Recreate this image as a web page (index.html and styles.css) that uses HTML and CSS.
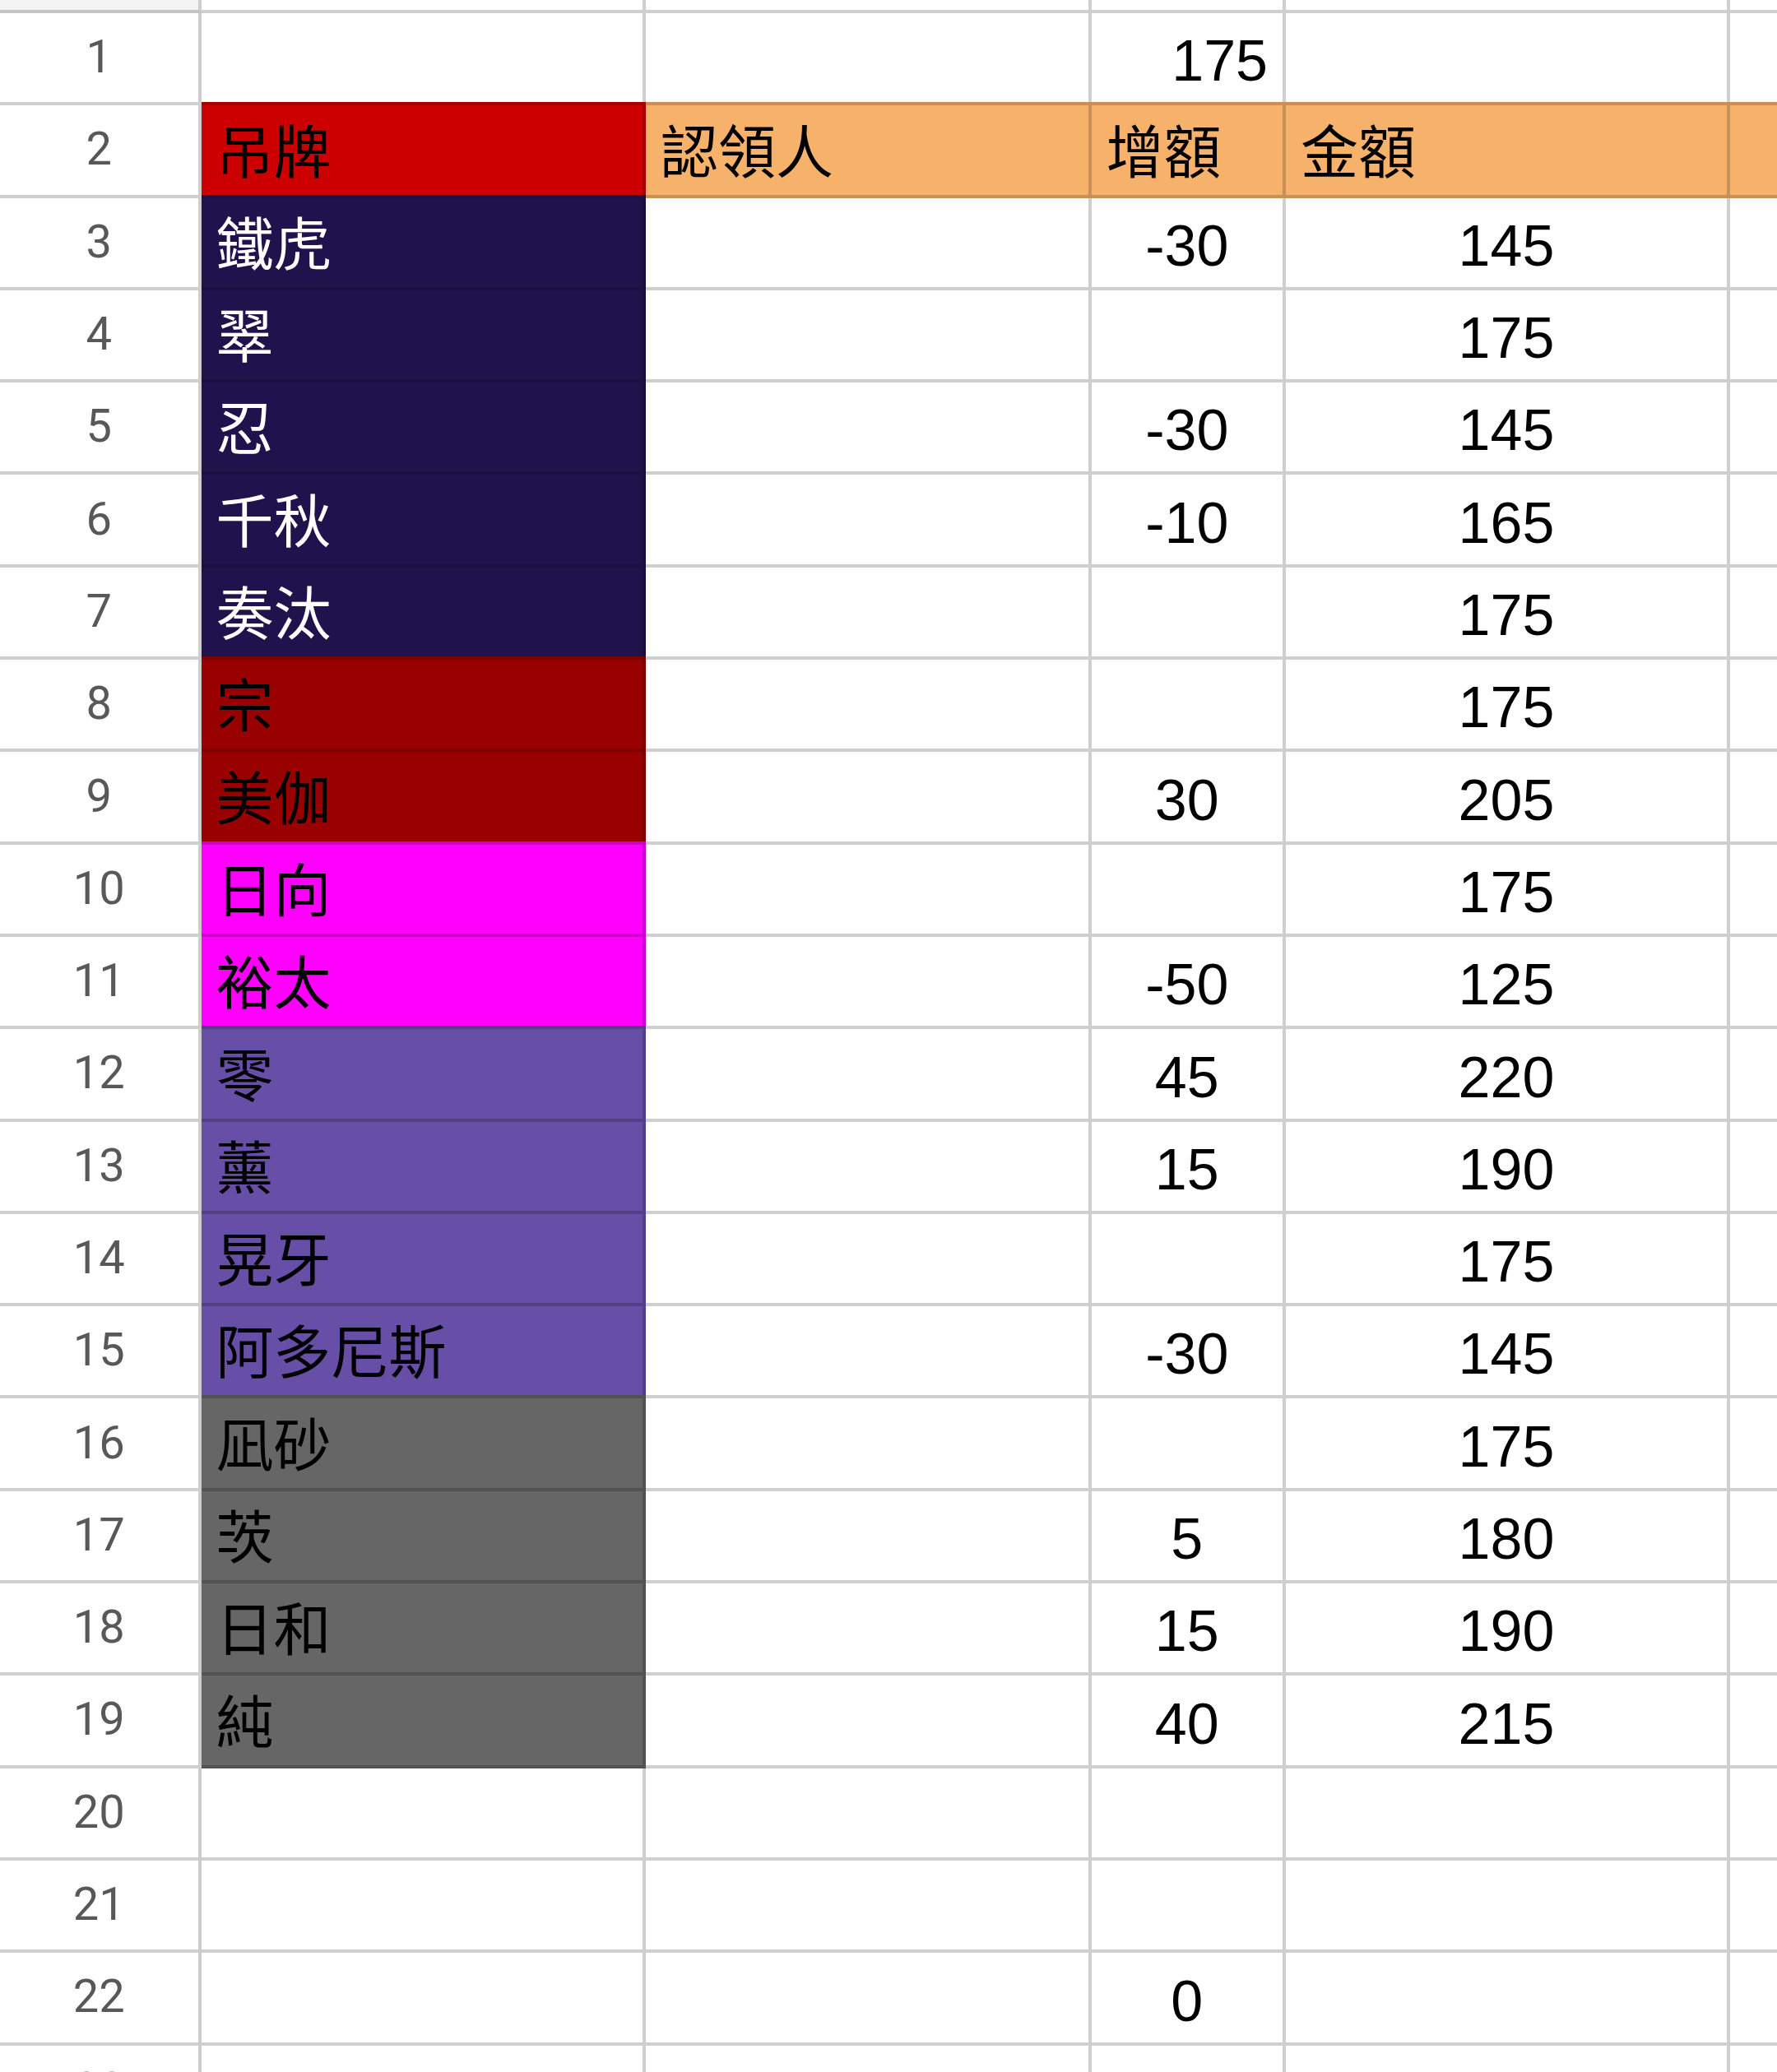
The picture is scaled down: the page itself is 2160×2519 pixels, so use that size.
FILE: index.html
```html
<!DOCTYPE html>
<html lang="zh-Hant">
<head>
    <meta charset="UTF-8">
    <meta name="viewport" content="width=device-width, initial-scale=1.0">
    <title>吊牌</title>
    <link rel="stylesheet" href="styles.css">
</head>
<body>
    <div class="sheet">
        <div class="row top">
            <div class="cell rh corner"></div>
            <div class="cell"></div>
            <div class="cell"></div>
            <div class="cell"></div>
            <div class="cell"></div>
            <div class="cell"></div>
        </div>
        <div class="row">
            <div class="cell rh">1</div>
            <div class="cell"></div>
            <div class="cell"></div>
            <div class="cell right">175</div>
            <div class="cell"></div>
            <div class="cell"></div>
        </div>
        <div class="row">
            <div class="cell rh">2</div>
            <div class="cell fill red">吊牌</div>
            <div class="cell fill orange">認領人</div>
            <div class="cell fill orange">增額</div>
            <div class="cell fill orange">金額</div>
            <div class="cell fill orange"></div>
        </div>
        <div class="row">
            <div class="cell rh">3</div>
            <div class="cell fill navy">鐵虎</div>
            <div class="cell"></div>
            <div class="cell center">-30</div>
            <div class="cell center">145</div>
            <div class="cell"></div>
        </div>
        <div class="row">
            <div class="cell rh">4</div>
            <div class="cell fill navy">翠</div>
            <div class="cell"></div>
            <div class="cell center"></div>
            <div class="cell center">175</div>
            <div class="cell"></div>
        </div>
        <div class="row">
            <div class="cell rh">5</div>
            <div class="cell fill navy">忍</div>
            <div class="cell"></div>
            <div class="cell center">-30</div>
            <div class="cell center">145</div>
            <div class="cell"></div>
        </div>
        <div class="row">
            <div class="cell rh">6</div>
            <div class="cell fill navy">千秋</div>
            <div class="cell"></div>
            <div class="cell center">-10</div>
            <div class="cell center">165</div>
            <div class="cell"></div>
        </div>
        <div class="row">
            <div class="cell rh">7</div>
            <div class="cell fill navy">奏汰</div>
            <div class="cell"></div>
            <div class="cell center"></div>
            <div class="cell center">175</div>
            <div class="cell"></div>
        </div>
        <div class="row">
            <div class="cell rh">8</div>
            <div class="cell fill maroon">宗</div>
            <div class="cell"></div>
            <div class="cell center"></div>
            <div class="cell center">175</div>
            <div class="cell"></div>
        </div>
        <div class="row">
            <div class="cell rh">9</div>
            <div class="cell fill maroon">美伽</div>
            <div class="cell"></div>
            <div class="cell center">30</div>
            <div class="cell center">205</div>
            <div class="cell"></div>
        </div>
        <div class="row">
            <div class="cell rh">10</div>
            <div class="cell fill magenta">日向</div>
            <div class="cell"></div>
            <div class="cell center"></div>
            <div class="cell center">175</div>
            <div class="cell"></div>
        </div>
        <div class="row">
            <div class="cell rh">11</div>
            <div class="cell fill magenta">裕太</div>
            <div class="cell"></div>
            <div class="cell center">-50</div>
            <div class="cell center">125</div>
            <div class="cell"></div>
        </div>
        <div class="row">
            <div class="cell rh">12</div>
            <div class="cell fill purple">零</div>
            <div class="cell"></div>
            <div class="cell center">45</div>
            <div class="cell center">220</div>
            <div class="cell"></div>
        </div>
        <div class="row">
            <div class="cell rh">13</div>
            <div class="cell fill purple">薰</div>
            <div class="cell"></div>
            <div class="cell center">15</div>
            <div class="cell center">190</div>
            <div class="cell"></div>
        </div>
        <div class="row">
            <div class="cell rh">14</div>
            <div class="cell fill purple">晃牙</div>
            <div class="cell"></div>
            <div class="cell center"></div>
            <div class="cell center">175</div>
            <div class="cell"></div>
        </div>
        <div class="row">
            <div class="cell rh">15</div>
            <div class="cell fill purple">阿多尼斯</div>
            <div class="cell"></div>
            <div class="cell center">-30</div>
            <div class="cell center">145</div>
            <div class="cell"></div>
        </div>
        <div class="row">
            <div class="cell rh">16</div>
            <div class="cell fill gray">凪砂</div>
            <div class="cell"></div>
            <div class="cell center"></div>
            <div class="cell center">175</div>
            <div class="cell"></div>
        </div>
        <div class="row">
            <div class="cell rh">17</div>
            <div class="cell fill gray">茨</div>
            <div class="cell"></div>
            <div class="cell center">5</div>
            <div class="cell center">180</div>
            <div class="cell"></div>
        </div>
        <div class="row">
            <div class="cell rh">18</div>
            <div class="cell fill gray">日和</div>
            <div class="cell"></div>
            <div class="cell center">15</div>
            <div class="cell center">190</div>
            <div class="cell"></div>
        </div>
        <div class="row">
            <div class="cell rh">19</div>
            <div class="cell fill gray">純</div>
            <div class="cell"></div>
            <div class="cell center">40</div>
            <div class="cell center">215</div>
            <div class="cell"></div>
        </div>
        <div class="row">
            <div class="cell rh">20</div>
            <div class="cell"></div>
            <div class="cell"></div>
            <div class="cell"></div>
            <div class="cell"></div>
            <div class="cell"></div>
        </div>
        <div class="row">
            <div class="cell rh">21</div>
            <div class="cell"></div>
            <div class="cell"></div>
            <div class="cell"></div>
            <div class="cell"></div>
            <div class="cell"></div>
        </div>
        <div class="row">
            <div class="cell rh">22</div>
            <div class="cell"></div>
            <div class="cell"></div>
            <div class="cell center">0</div>
            <div class="cell"></div>
            <div class="cell"></div>
        </div>
        <div class="row">
            <div class="cell rh">23</div>
            <div class="cell"></div>
            <div class="cell"></div>
            <div class="cell"></div>
            <div class="cell"></div>
            <div class="cell"></div>
        </div>
    </div>
</body>
</html>
```
FILE: styles.css
```css
* {
    margin: 0;
    padding: 0;
    box-sizing: border-box;
}

body {
    background-color: #fff;
    overflow: hidden;
    font-family: "Liberation Sans", "Noto Sans CJK TC", sans-serif;
}

.sheet {
    width: 2160px;
}

.row {
    display: grid;
    grid-template-columns: 244.5px 540.5px 541.5px 236.5px 540px 1fr;
    height: 112.3px;
}

.row.top {
    height: 16px;
}

.cell {
    display: flex;
    align-items: flex-end;
    padding: 0 18px 15px;
    border-right: 4px solid rgba(0,0,0,0.19);
    border-bottom: 4px solid rgba(0,0,0,0.19);
    font-size: 70px;
    line-height: 1;
    color: #000;
    white-space: nowrap;
    overflow: hidden;
}

.cell:last-child {
    border-right: 0;
}

.top .cell {
    padding: 0;
}

/* numeros das linhas */
.rh {
    justify-content: center;
    align-items: center;
    padding: 0 0 2px;
    font-family: Roboto, "Liberation Sans", sans-serif;
    font-size: 56px;
    color: #585858;
    border-right-color: #cdcdcd;
}

.corner {
    background-color: #f3f3f3;
}

.right {
    justify-content: flex-end;
}

.center {
    justify-content: center;
}

/* celulas coloridas cobrem a linha de cima tambem */
.fill {
    box-shadow: 0 -4px 0 var(--edge);
}

.red { background-color: #cc0000; --edge: #a50000; }
.orange { background-color: #f6b26b; --edge: #c79057; }
.navy { background-color: #20124d; --edge: #1a0f3e; color: #fff; }
.maroon { background-color: #990000; --edge: #7c0000; }
.magenta { background-color: #ff00ff; --edge: #cf00cf; }
.purple { background-color: #674ea7; --edge: #543f87; }
.gray { background-color: #666666; --edge: #535353; }
```
